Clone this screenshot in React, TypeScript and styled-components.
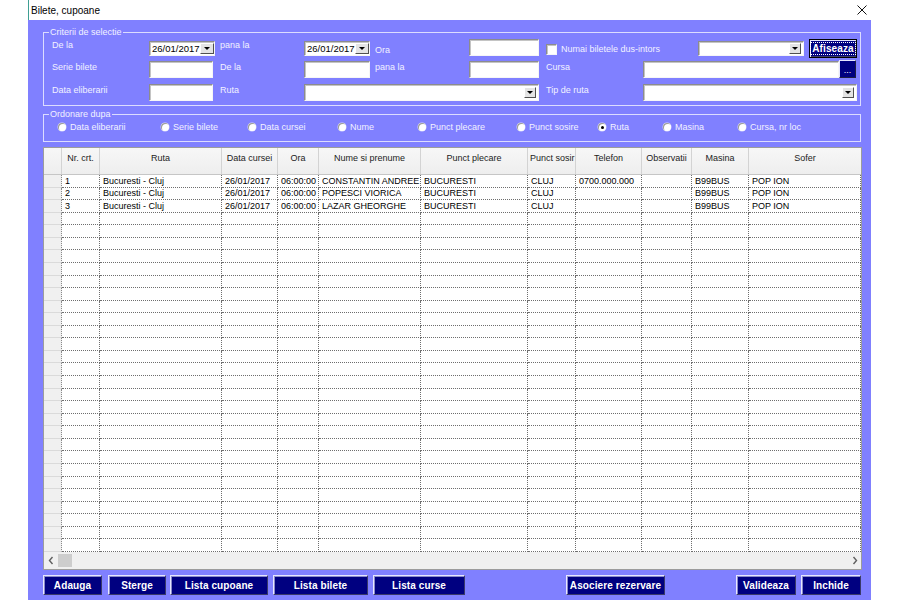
import React from "react";
import styled, { createGlobalStyle } from "styled-components";

const Global = createGlobalStyle`
  html, body { margin: 0; padding: 0; background: #ffffff; }
  body { font-family: "Liberation Sans", Arial, sans-serif; }
  * { box-sizing: border-box; }
`;

const PURPLE = "#8080ff";

const Window = styled.div`
  margin-left: 28px;
  width: 843px;
  height: 600px;
  display: flex;
  flex-direction: column;
`;

const TitleBar = styled.div`
  flex: none;
  height: 20px;
  display: flex;
  align-items: center;
  justify-content: space-between;
  padding: 0 4px 0 2px;
  border-left: 1px solid #3f9f93;
  background: #ffffff;
  font-size: 10px;
  color: #000;
`;

const Client = styled.div`
  flex: 1;
  min-height: 0;
  background: ${PURPLE};
  padding: 12px 9px 5px 15px;
  display: flex;
  flex-direction: column;
`;

const Group = styled.div<{ $h: number; $mt?: number }>`
  position: relative;
  flex: none;
  height: ${(p) => p.$h}px;
  margin: ${(p) => p.$mt ?? 0}px 1px 0 0;
  border: 1px solid #dcdcff;
`;

const Caption = styled.span`
  position: absolute;
  top: -7px;
  left: 5px;
  padding: 0 1px;
  background: ${PURPLE};
  font-size: 9px;
  line-height: 12px;
  color: #f2f2ff;
`;

const CriteriaGrid = styled.div`
  display: grid;
  grid-template-columns: 97px 68px 87px 66px 99px 70px 104px 214px;
  grid-template-rows: 21px 23px 18px;
  align-items: start;
  padding: 6px 3px 0 8px;
`;

const Label = styled.span<{ $dy?: number; $pl?: number }>`
  margin-top: ${(p) => p.$dy ?? 1}px;
  padding-left: ${(p) => p.$pl ?? 0}px;
  font-size: 9px;
  line-height: 12px;
  color: #f2f2ff;
  white-space: nowrap;
`;

const Field = styled.div<{ $w?: number; $h?: number; $mt?: number }>`
  width: ${(p) => (p.$w ? `${p.$w}px` : "auto")};
  height: ${(p) => p.$h ?? 17}px;
  margin-top: ${(p) => p.$mt ?? 1}px;
  background: #ffffff;
  border: 1px solid;
  border-color: #8c8c8c #f6f6f6 #f6f6f6 #8c8c8c;
  box-shadow: inset 1px 1px 0 #c4c4c4;
  display: flex;
  align-items: center;
  font-size: 9px;
  color: #000;
`;

const Combo = styled(Field)`
  justify-content: flex-end;
  padding-right: 1px;
`;

const DateText = styled.span`
  flex: 1;
  padding-left: 2px;
  font-size: 9.5px;
`;

const DropBtn = styled.span<{ $w?: number }>`
  flex: none;
  width: ${(p) => p.$w ?? 12}px;
  height: 11px;
  background: #e4e4e4;
  border: 1px solid;
  border-color: #ffffff #505050 #505050 #ffffff;
  display: flex;
  align-items: center;
  justify-content: center;
  margin-right: 1px;
  &::after {
    content: "";
    border-left: 3px solid transparent;
    border-right: 3px solid transparent;
    border-top: 3px solid #000;
  }
`;

const Span = styled.div<{ $from: number; $to: number }>`
  grid-column: ${(p) => p.$from} / ${(p) => p.$to};
  display: flex;
  align-items: flex-start;
`;

const CheckWrap = styled.label`
  display: flex;
  align-items: center;
  gap: 4px;
  margin: 4px 0 0 7px;
`;

const CheckBox = styled.span`
  width: 11px;
  height: 11px;
  background: #ffffff;
  border: 1px solid;
  border-color: #8c8c8c #f6f6f6 #f6f6f6 #8c8c8c;
  box-shadow: inset 1px 1px 0 #c4c4c4;
`;

const CheckText = styled.span`
  font-size: 9px;
  line-height: 12px;
  color: #f2f2ff;
  white-space: nowrap;
`;

const NavyBtn = styled.button<{ $w: number; $ml?: number }>`
  flex: none;
  width: ${(p) => p.$w}px;
  height: 20px;
  margin-left: ${(p) => p.$ml ?? 0}px;
  padding: 0;
  background: #000080;
  color: #ffffff;
  font-family: "Liberation Sans", Arial, sans-serif;
  font-weight: bold;
  font-size: 10px;
  letter-spacing: 0.1px;
  border: 1px solid;
  border-color: #e6e6ff #3a3a6a #3a3a6a #e6e6ff;
  box-shadow: inset 1px 1px 0 #8a8ac8;
  display: flex;
  align-items: center;
  justify-content: center;
  cursor: default;
`;

const DefaultBtn = styled(NavyBtn)`
  height: 19px;
  margin-left: 5px;
  border: 1px solid #000000;
  box-shadow: inset 1px 1px 0 #e6e6ff, inset -1px -1px 0 #3a3a6a;
`;

const FocusText = styled.span`
  padding: 0 1px;
  line-height: 11px;
  outline: 1px dotted #ffffff;
  outline-offset: 0;
`;

const DotsBtn = styled.button`
  flex: none;
  width: 17px;
  height: 18px;
  margin: 0 1px 0 0;
  padding: 0 0 2px;
  background: #000080;
  color: #ffffff;
  font-family: "Liberation Sans", Arial, sans-serif;
  font-size: 9px;
  line-height: 1;
  border: 1px solid;
  border-color: #e6e6ff #202040 #202040 #e6e6ff;
  display: flex;
  align-items: flex-end;
  justify-content: center;
`;

const RadioRow = styled.div`
  display: grid;
  grid-template-columns: 103px 87px 90px 80px 99px 81px 65px 75px 1fr;
  align-items: center;
  height: 100%;
  padding: 0 0 2px 14px;
`;

const RadioItem = styled.label`
  display: flex;
  align-items: center;
  gap: 4px;
  font-size: 9px;
  line-height: 12px;
  color: #f2f2ff;
  white-space: nowrap;
`;

const RadioDot = styled.span<{ $on?: boolean }>`
  width: 8px;
  height: 8px;
  border-radius: 50%;
  background: #ffffff;
  box-shadow: inset 1px 1px 0 #9a9a9a, 0 0 0 0.5px #d8d8ff;
  display: flex;
  align-items: center;
  justify-content: center;
  &::after {
    content: "";
    width: 3px;
    height: 3px;
    border-radius: 50%;
    background: ${(p) => (p.$on ? "#000" : "transparent")};
  }
`;

const COLS = "18px 38px 122px 56px 41px 102px 107px 48px 66px 50px 57px 112px";

const Table = styled.div`
  flex: 1;
  min-height: 0;
  margin-top: 5px;
  border: 1px solid #9c9c9c;
  background: #ffffff;
  display: flex;
  flex-direction: column;
`;

const HeadRow = styled.div`
  flex: none;
  height: 27px;
  display: grid;
  grid-template-columns: ${COLS};
  background: linear-gradient(#f7f7f7, #eeeeee);
  border-bottom: 1px solid #c6c6c6;
`;

const HeadCell = styled.div`
  border-right: 1px solid #d3d3d3;
  padding: 4px 2px 0;
  text-align: center;
  font-size: 9px;
  line-height: 12px;
  color: #1c1c1c;
  overflow: hidden;
  white-space: nowrap;
  &:last-child {
    border-right: none;
  }
`;

const BodyRows = styled.div`
  flex: 1;
  min-height: 0;
  display: grid;
  grid-template-rows: repeat(30, 1fr);
  overflow: hidden;
`;

const Row = styled.div`
  display: grid;
  grid-template-columns: ${COLS};
  min-height: 0;
`;

const Cell = styled.div`
  border-right: 1px dotted #6e6e6e;
  border-bottom: 1px dotted #6e6e6e;
  padding-left: 3px;
  font-size: 9px;
  color: #000;
  display: flex;
  align-items: center;
  overflow: hidden;
  white-space: nowrap;
  min-height: 0;
`;

const SelCell = styled.div`
  background: #f0f0f0;
  border-right: 1px dotted #8a8a8a;
  border-bottom: 1px solid #dadada;
`;

const HScroll = styled.div`
  flex: none;
  height: 17px;
  background: #f0f0f0;
  display: flex;
  align-items: center;
`;

const ScrollArrow = styled.span`
  flex: none;
  width: 13px;
  height: 17px;
  display: flex;
  align-items: center;
  justify-content: center;
`;

const Thumb = styled.span`
  flex: none;
  width: 14px;
  height: 13px;
  margin-left: 1px;
  background: #cdcdcd;
`;

const Track = styled.span`
  flex: 1;
`;

const ButtonBar = styled.div`
  flex: none;
  height: 20px;
  margin-top: 5px;
  display: flex;
`;

const ChevronLeft = () => (
  <svg width="6" height="9" viewBox="0 0 6 9">
    <polyline points="4.5,1 1.5,4.5 4.5,8" fill="none" stroke="#606060" strokeWidth="1.4" />
  </svg>
);

const ChevronRight = () => (
  <svg width="6" height="9" viewBox="0 0 6 9">
    <polyline points="1.5,1 4.5,4.5 1.5,8" fill="none" stroke="#606060" strokeWidth="1.4" />
  </svg>
);

const CloseIcon = () => (
  <svg width="10" height="10" viewBox="0 0 10 10">
    <path d="M0.5 0.5 L9.5 9.5 M9.5 0.5 L0.5 9.5" stroke="#111" strokeWidth="1" fill="none" />
  </svg>
);

const headers = [
  "",
  "Nr. crt.",
  "Ruta",
  "Data cursei",
  "Ora",
  "Nume si prenume",
  "Punct plecare",
  "Punct sosir",
  "Telefon",
  "Observatii",
  "Masina",
  "Sofer",
];

const data: string[][] = [
  ["1", "Bucuresti - Cluj", "26/01/2017", "06:00:00", "CONSTANTIN ANDREE", "BUCURESTI", "CLUJ", "0700.000.000", "", "B99BUS", "POP ION"],
  ["2", "Bucuresti - Cluj", "26/01/2017", "06:00:00", "POPESCI VIORICA", "BUCURESTI", "CLUJ", "", "", "B99BUS", "POP ION"],
  ["3", "Bucuresti - Cluj", "26/01/2017", "06:00:00", "LAZAR GHEORGHE", "BUCURESTI", "CLUJ", "", "", "B99BUS", "POP ION"],
];

const rows: string[][] = Array.from({ length: 30 }, (_, i) => data[i] ?? Array(11).fill(""));

const radios = [
  "Data eliberarii",
  "Serie bilete",
  "Data cursei",
  "Nume",
  "Punct plecare",
  "Punct sosire",
  "Ruta",
  "Masina",
  "Cursa, nr loc",
];

const buttons: { t: string; w: number; ml: number }[] = [
  { t: "Adauga", w: 59, ml: 0 },
  { t: "Sterge", w: 58, ml: 6 },
  { t: "Lista cupoane", w: 98, ml: 4 },
  { t: "Lista bilete", w: 95, ml: 5 },
  { t: "Lista curse", w: 92, ml: 5 },
  { t: "Asociere rezervare", w: 99, ml: 101 },
  { t: "Valideaza", w: 60, ml: 71 },
  { t: "Inchide", w: 60, ml: 5 },
];

const DateBox = () => (
  <Field $w={66} $h={15} $mt={2}>
    <DateText>26/01/2017</DateText>
    <DropBtn $w={14} />
  </Field>
);

export default function App() {
  return (
    <>
      <Global />
      <Window>
        <TitleBar>
          <span>Bilete, cupoane</span>
          <CloseIcon />
        </TitleBar>
        <Client>
          <Group $h={74}>
            <Caption>Criterii de selectie</Caption>
            <CriteriaGrid>
              <Label $dy={0}>De la</Label>
              <DateBox />
              <Label $dy={0} $pl={3}>pana la</Label>
              <DateBox />
              <Label $dy={5} $pl={5}>Ora</Label>
              <Field $w={70} $mt={0} />
              <Span $from={7} $to={9}>
                <CheckWrap>
                  <CheckBox />
                  <CheckText>Numai biletele dus-intors</CheckText>
                </CheckWrap>
                <Combo $w={106} $h={15} $mt={2} style={{ marginLeft: "auto" }}>
                  <DropBtn />
                </Combo>
                <DefaultBtn $w={48}>
                  <FocusText>Afiseaza</FocusText>
                </DefaultBtn>
              </Span>

              <Label>Serie bilete</Label>
              <Field $w={64} />
              <Label $pl={3}>De la</Label>
              <Field $w={66} />
              <Label $pl={5}>pana la</Label>
              <Field $w={70} />
              <Label $pl={7}>Cursa</Label>
              <Span $from={8} $to={9}>
                <Field style={{ flex: 1 }} />
                <DotsBtn>...</DotsBtn>
              </Span>

              <Label>Data eliberarii</Label>
              <Field $w={64} />
              <Label $pl={3}>Ruta</Label>
              <Span $from={4} $to={7}>
                <Combo style={{ flex: 1 }}>
                  <DropBtn />
                </Combo>
              </Span>
              <Label $pl={7}>Tip de ruta</Label>
              <Combo>
                <DropBtn />
              </Combo>
            </CriteriaGrid>
          </Group>

          <Group $h={28} $mt={8}>
            <Caption>Ordonare dupa</Caption>
            <RadioRow>
              {radios.map((r) => (
                <RadioItem key={r}>
                  <RadioDot $on={r === "Ruta"} />
                  {r}
                </RadioItem>
              ))}
            </RadioRow>
          </Group>

          <Table>
            <HeadRow>
              {headers.map((h, i) => (
                <HeadCell key={i}>{h}</HeadCell>
              ))}
            </HeadRow>
            <BodyRows>
              {rows.map((r, i) => (
                <Row key={i}>
                  <SelCell />
                  {r.map((c, j) => (
                    <Cell key={j}>{c}</Cell>
                  ))}
                </Row>
              ))}
            </BodyRows>
            <HScroll>
              <ScrollArrow>
                <ChevronLeft />
              </ScrollArrow>
              <Thumb />
              <Track />
              <ScrollArrow>
                <ChevronRight />
              </ScrollArrow>
            </HScroll>
          </Table>

          <ButtonBar>
            {buttons.map((b) => (
              <NavyBtn key={b.t} $w={b.w} $ml={b.ml}>
                {b.t}
              </NavyBtn>
            ))}
          </ButtonBar>
        </Client>
      </Window>
    </>
  );
}
